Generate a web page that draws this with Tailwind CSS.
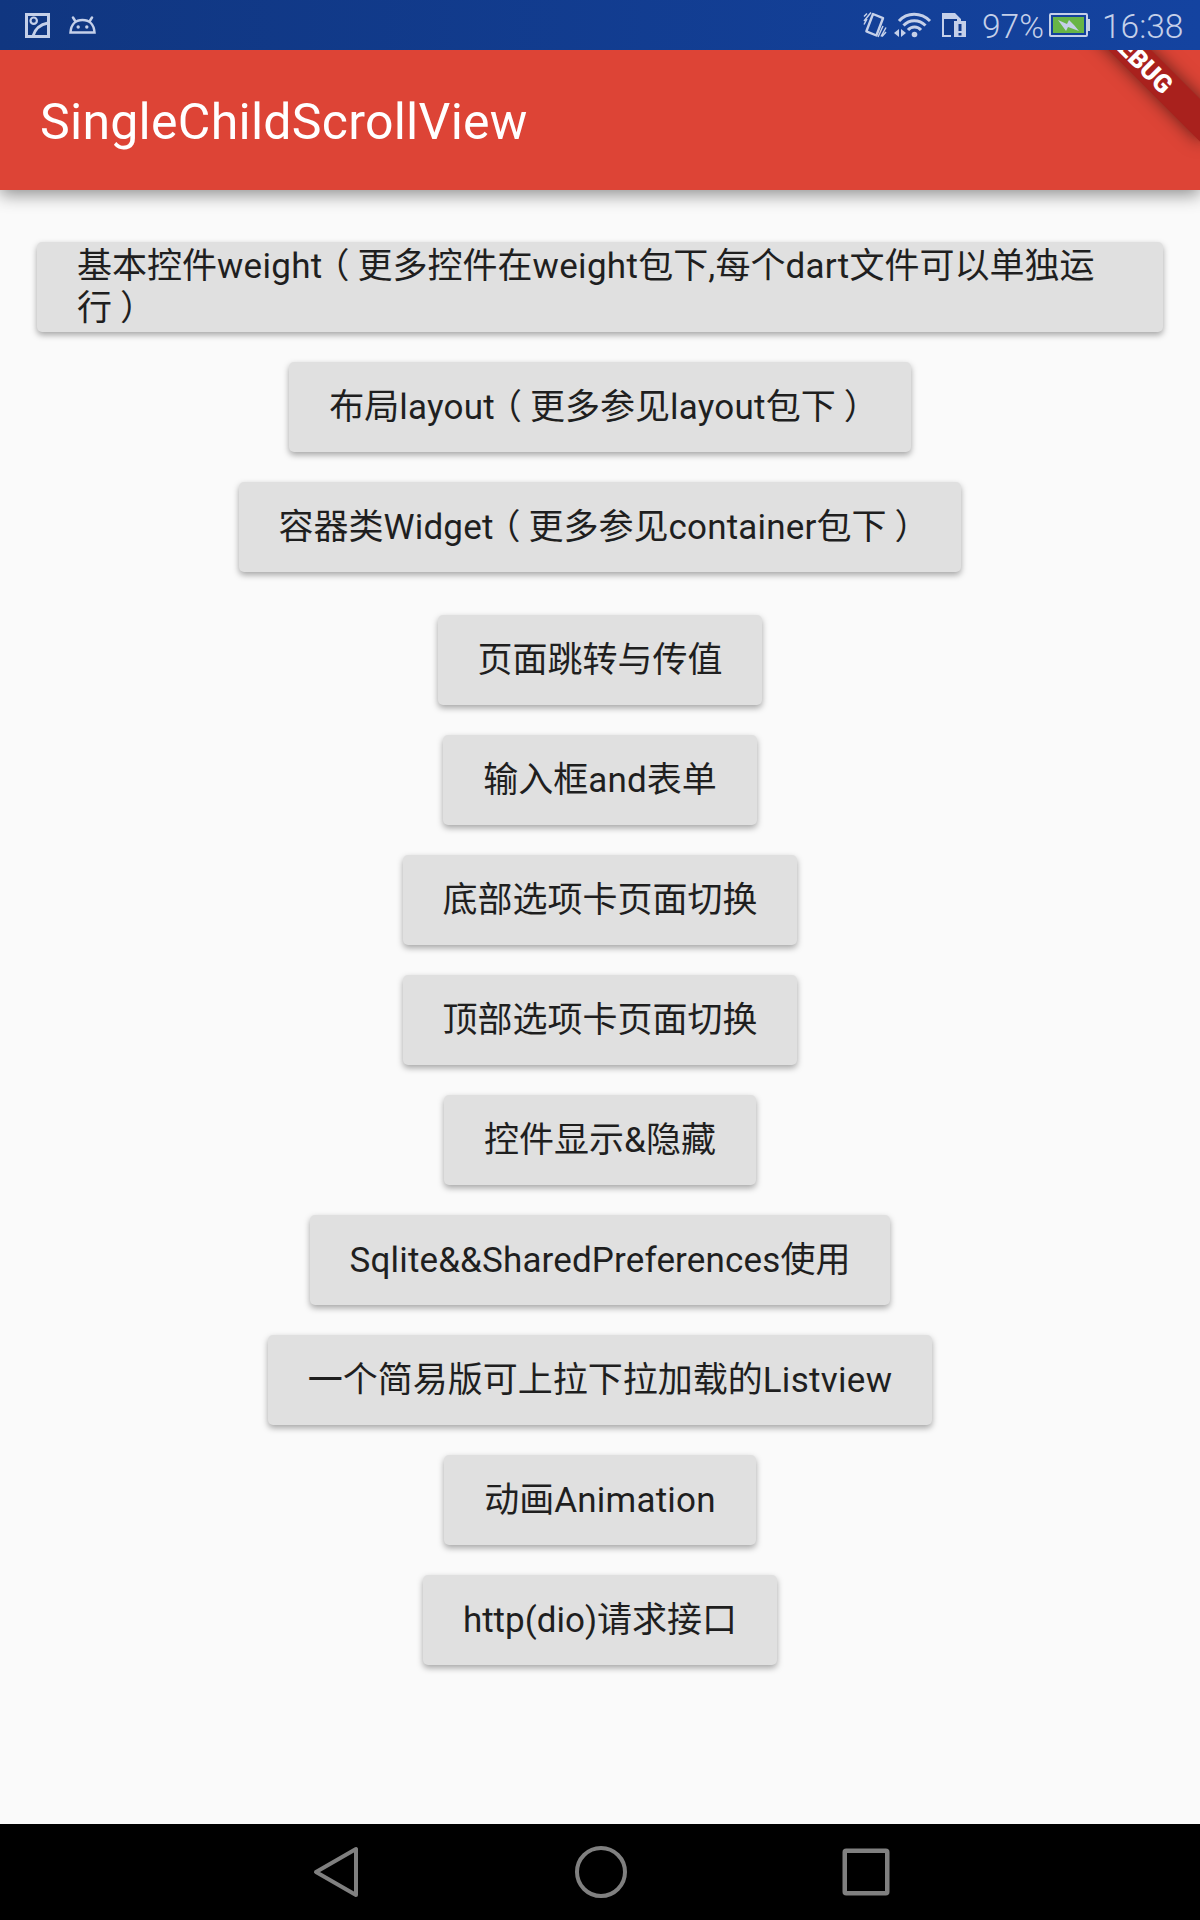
<!DOCTYPE html>
<html lang="zh-CN">
<head>
<meta charset="utf-8">
<title>SingleChildScrollView</title>
<script src="https://cdn.jsdelivr.net/npm/@tailwindcss/browser@4"></script>
</head>
<body class="bg-[#fafafa]">
<div class="relative w-[1200px] h-[1920px] flex flex-col overflow-hidden bg-[#fafafa] font-['Roboto','Noto_Sans_CJK_SC',sans-serif]">
  <header class="relative z-20 h-[50px] shrink-0 flex items-center bg-linear-to-r from-[#103680] to-[#1443a0] text-[#c5d0e9]">
    <svg class="ml-6 w-[27px] h-[27px]" viewBox="0 0 27 27" fill="none" stroke="currentColor" stroke-width="3"><rect x="2.5" y="2.5" width="22" height="22"/><circle cx="9.7" cy="8.7" r="3.2" stroke-width="2.2"/><path d="M9 24C11 17 16 12.500 24 11" stroke-width="2.800"/></svg>
    <svg class="ml-[17px] w-[29px] h-[19px]" viewBox="0 0 29 19" fill="none" stroke="currentColor" stroke-width="2.500"><path d="M2.500 16.500C3 8 8 4 14.500 4S26 8 26.500 16.500Z"/><path d="M5 1.500l2.500 4M24 1.500l-2.500 4" stroke-linecap="round"/><circle cx="10.200" cy="11" r="1.700" fill="currentColor" stroke="none"/><circle cx="18.800" cy="11" r="1.700" fill="currentColor" stroke="none"/></svg>
    <div class="ml-auto flex items-center">
      <svg class="w-[24px] h-[28px]" viewBox="0 0 24 28" fill="none" stroke="currentColor"><path d="M10 3l10 4.200-6.600 17.300-10-4.200z" stroke-width="2.400" stroke-linejoin="round"/><path d="M1 5.500L4 2.500M1 10L8 1.500M1 13.500L4 8M23 16.500l-5 9M23 21l-4 4.500M20 15l-5 11" stroke-width="1.500"/></svg>
      <svg class="ml-[7px] w-[38px] h-[28px]" viewBox="0 0 38 28" fill="none" stroke="currentColor" stroke-width="3"><path d="M5 10C13 1 27 1 36 10" /><path d="M9.500 14.500C15.500 8 25 8 31.500 14.500"/><path d="M14 19C17.500 15 23.500 15 27 19"/><circle cx="20.500" cy="23.500" r="2.800" fill="currentColor" stroke="none"/><path d="M0 22l5-4v8zM7 18l5 4-5 4z" fill="currentColor" stroke="none"/></svg>
      <svg class="ml-[9px] w-[26px] h-[26px]" viewBox="0 0 26 26"><path d="M1 1h13l6 6v3H10v15H1z" fill="currentColor"/><path d="M3 7h13v3H13v13H3z" fill="#123b8e"/><path d="M13 9h12v16H13z" fill="currentColor"/><path d="M17.500 12h3v7h-3zM17.500 21h3v2.500h-3z" fill="#123b8e"/></svg>
      <span class="ml-[15px] w-[66px] text-[33.5px] leading-none font-light pt-[4px] whitespace-nowrap">97%</span>
      <svg class="ml-[1px] w-[42px] h-[24px]" viewBox="0 0 42 24"><rect x="1" y="1" width="37" height="22" rx="1" fill="none" stroke="currentColor" stroke-width="2"/><path d="M38 6h3v12h-3z" fill="currentColor"/><rect x="4" y="4" width="31" height="16" fill="#68b547"/><path d="M9 7l9 4 2-4 5 5 5 6-11-4-2 4z" fill="currentColor"/></svg>
      <span class="ml-[11px] w-[98px] text-[33.5px] leading-none font-light pt-[4px]">16:38</span>
    </div>
  </header>
  <div class="relative z-10 h-[140px] shrink-0 flex items-center pl-10 bg-[#dd4436] shadow-[0_5px_16px_rgba(0,0,0,0.42)]">
    <h1 class="pt-[3px] text-[50px] leading-none tracking-[0.27px] text-white">SingleChildScrollView</h1>
  </div>
  <div class="absolute z-[15] left-[1100px] top-[70px] w-[200px] h-[30px] origin-[100px_-70px] rotate-45 bg-[#a9211d] shadow-[0_0_17px_rgba(0,0,0,0.55)] text-center text-[25.5px] leading-[30px] font-black text-white">DEBUG</div>

  <main class="grow flex flex-col items-center gap-[30px] pt-[52px] px-[37px] text-[35px] leading-[42px] text-[#1f1f1f]">
    <button class="w-full h-[90px] shrink-0 px-10 pt-px text-left rounded-[5px] bg-[#e0e0e0] shadow-[0_3px_6px_rgba(0,0,0,0.34)]">基本控件<span class="tracking-[0.3px]">weight</span><span class="ml-[9.5px] mr-[8px] [font-feature-settings:'halt']">（</span>更多控件在<span class="tracking-[0.3px]">weight</span>包下<span class="tracking-[0.3px]">,</span>每个<span class="tracking-[0.3px]">dart</span>文件可以单独运行<span class="ml-[8px] mr-[9.5px] [font-feature-settings:'halt']">）</span></button>
    <button class="h-[90px] shrink-0 px-10 pt-px rounded-[5px] bg-[#e0e0e0] shadow-[0_3px_6px_rgba(0,0,0,0.34)]">布局<span class="tracking-[0.25px]">layout</span><span class="ml-[9.5px] mr-[8px] [font-feature-settings:'halt']">（</span>更多参见<span class="tracking-[0.25px]">layout</span>包下<span class="ml-[8px] mr-[9.5px] [font-feature-settings:'halt']">）</span></button>
    <button class="h-[90px] shrink-0 px-10 pt-px rounded-[5px] bg-[#e0e0e0] shadow-[0_3px_6px_rgba(0,0,0,0.34)]">容器类<span class="tracking-[0.17px]">Widget</span><span class="ml-[9.5px] mr-[8px] [font-feature-settings:'halt']">（</span>更多参见<span class="tracking-[0.17px]">container</span>包下<span class="ml-[8px] mr-[9.5px] [font-feature-settings:'halt']">）</span></button>
    <button class="mt-[13px] w-[324px] h-[90px] shrink-0 pt-px rounded-[5px] bg-[#e0e0e0] shadow-[0_3px_6px_rgba(0,0,0,0.34)]">页面跳转与传值</button>
    <button class="h-[90px] shrink-0 px-10 pt-px rounded-[5px] bg-[#e0e0e0] shadow-[0_3px_6px_rgba(0,0,0,0.34)]">输入框<span class="tracking-[0.2px]">and</span>表单</button>
    <button class="w-[394px] h-[90px] shrink-0 pt-px rounded-[5px] bg-[#e0e0e0] shadow-[0_3px_6px_rgba(0,0,0,0.34)]">底部选项卡页面切换</button>
    <button class="w-[394px] h-[90px] shrink-0 pt-px rounded-[5px] bg-[#e0e0e0] shadow-[0_3px_6px_rgba(0,0,0,0.34)]">顶部选项卡页面切换</button>
    <button class="h-[90px] shrink-0 px-10 pt-px rounded-[5px] bg-[#e0e0e0] shadow-[0_3px_6px_rgba(0,0,0,0.34)]">控件显示&amp;隐藏</button>
    <button class="h-[90px] shrink-0 px-10 pt-px rounded-[5px] bg-[#e0e0e0] shadow-[0_3px_6px_rgba(0,0,0,0.34)]"><span class="tracking-[0.15px]">Sqlite&amp;&amp;SharedPreferences</span>使用</button>
    <button class="h-[90px] shrink-0 px-10 pt-px rounded-[5px] bg-[#e0e0e0] shadow-[0_3px_6px_rgba(0,0,0,0.34)]">一个简易版可上拉下拉加载的<span class="tracking-[0.3px]">Listview</span></button>
    <button class="h-[90px] shrink-0 px-10 pt-px rounded-[5px] bg-[#e0e0e0] shadow-[0_3px_6px_rgba(0,0,0,0.34)]">动画<span class="tracking-[0.2px]">Animation</span></button>
    <button class="h-[90px] shrink-0 px-10 pt-px rounded-[5px] bg-[#e0e0e0] shadow-[0_3px_6px_rgba(0,0,0,0.34)]">http(dio)请求接口</button>
  </main>

  <nav class="h-[96px] shrink-0 bg-black flex items-center pl-[312px] text-[#808080]">
    <svg class="w-[48px] h-[54px]" viewBox="0 0 48 54" fill="none" stroke="currentColor" stroke-width="4" stroke-linejoin="round"><path d="M44 4v46L4 27z"/></svg>
    <svg class="ml-[214px] w-[54px] h-[54px]" viewBox="0 0 54 54" fill="none" stroke="currentColor" stroke-width="4"><circle cx="27" cy="27" r="24"/></svg>
    <svg class="ml-[214px] w-[48px] h-[48px]" viewBox="0 0 48 48" fill="none" stroke="currentColor" stroke-width="4.500"><rect x="2.750" y="2.750" width="42.500" height="42.500" rx="1.500"/></svg>
  </nav>
</div>
</body>
</html>
